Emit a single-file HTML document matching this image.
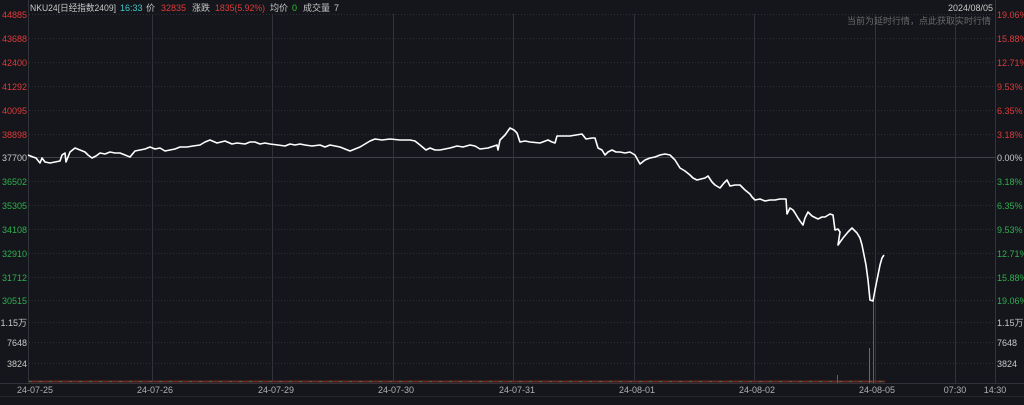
<!DOCTYPE html>
<html><head><meta charset="utf-8"><style>
body{margin:0;background:#14161b;width:1024px;height:400px;overflow:hidden;font-family:"Liberation Sans","Noto Sans CJK SC",sans-serif;}
svg text{font-family:"Liberation Sans","Noto Sans CJK SC",sans-serif;font-size:9px;}
</style></head><body>
<svg width="1024" height="400" xmlns="http://www.w3.org/2000/svg">
<rect width="1024" height="400" fill="#14161b"/>
<g stroke="#2e3137" stroke-width="1" stroke-dasharray="1,2">
<line x1="29" x2="995" y1="14.5" y2="14.5"/><line x1="29" x2="995" y1="38.5" y2="38.5"/><line x1="29" x2="995" y1="62.5" y2="62.5"/><line x1="29" x2="995" y1="86.5" y2="86.5"/><line x1="29" x2="995" y1="110.5" y2="110.5"/><line x1="29" x2="995" y1="134.5" y2="134.5"/><line x1="29" x2="995" y1="181.5" y2="181.5"/><line x1="29" x2="995" y1="205.5" y2="205.5"/><line x1="29" x2="995" y1="229.5" y2="229.5"/><line x1="29" x2="995" y1="253.5" y2="253.5"/><line x1="29" x2="995" y1="277.5" y2="277.5"/><line x1="29" x2="995" y1="300.5" y2="300.5"/><line x1="29" x2="995" y1="322.5" y2="322.5"/><line x1="29" x2="995" y1="342.5" y2="342.5"/><line x1="29" x2="995" y1="363.5" y2="363.5"/>
</g>
<line x1="29" x2="995" y1="157.5" y2="157.5" stroke="#3e4148"/>
<g stroke="#30333a">
<line x1="28.5" x2="28.5" y1="0" y2="383"/><line x1="995.5" x2="995.5" y1="0" y2="383"/>
<line x1="152.5" x2="152.5" y1="14" y2="383"/><line x1="272.5" x2="272.5" y1="14" y2="383"/><line x1="393.5" x2="393.5" y1="14" y2="383"/><line x1="513.5" x2="513.5" y1="14" y2="383"/><line x1="634.5" x2="634.5" y1="14" y2="383"/><line x1="754.5" x2="754.5" y1="14" y2="383"/><line x1="875.5" x2="875.5" y1="14" y2="383"/><line x1="955.5" x2="955.5" y1="14" y2="383"/>
<line x1="0" x2="1024" y1="383.5" y2="383.5"/><line x1="0" x2="1024" y1="396.5" y2="396.5" stroke="#25272c"/>
</g>
<line x1="29" x2="885" y1="381.5" y2="381.5" stroke="#6a2a2a" stroke-width="2"/>
<line x1="29" x2="885" y1="381.5" y2="381.5" stroke="#2f7a3f" stroke-width="1" stroke-dasharray="3,7"/>
<line x1="869.5" x2="869.5" y1="348" y2="383" stroke="#1f9a3a"/>
<line x1="873.5" x2="873.5" y1="300" y2="383" stroke="#d03030"/>
<line x1="837.5" x2="837.5" y1="375" y2="383" stroke="#d03030"/>
<polyline fill="none" stroke="#fff" stroke-width="1.6" stroke-linejoin="round" points="28,155 33,157 36,158 40,163 42,158 45,162 50,163 55,162 60,161 62,155 65,153 66,162 70,152 75,148 80,150 85,152 88,155 92,158 96,156 100,153 105,154 110,152 115,153 120,153 125,155 130,157 135,151 140,150 145,149 150,147 155,149 160,148 165,151 170,150 175,149 180,147 187,147 193,146 200,145 205,142 210,140 217,143 225,141 232,144 237,143 245,144 250,142 255,142 260,144 265,143 270,144 278,145 285,146 290,144 295,145 300,144 305,145 312,146 320,145 325,147 330,145 335,146 340,147 345,149 350,151 355,149 360,147 365,144 370,141 375,139 382,140 390,139 400,140 410,140 415,141 420,145 426,150 430,148 435,150 440,150 445,149 450,148 457,146 463,147 470,145 475,146 480,149 488,148 497,145 498,150 500,140 505,135 510,128 514,130 517,133 520,142 525,141 530,142 540,143 548,140 552,142 555,143 557,136 564,136 570,136 576,135 582,134 586,139 592,138 595,138 598,148 602,150 605,155 608,152 612,150 616,152 620,152 625,153 630,152 635,155 640,164 645,160 650,158 655,157 660,155 665,154 670,155 675,160 680,168 685,171 690,175 693,178 697,180 701,179 705,178 708,176 712,182 715,185 720,188 724,183 727,180 730,186 735,185 740,185 745,190 750,194 752,197 755,200 760,199 765,201 770,200 775,200 780,199 786,199 787,214 790,208 793,210 795,213 798,218 800,221 803,225 805,218 808,212 812,216 818,219 822,217 825,217 830,214 833,215 835,230 838,229 840,232 838,245 843,238 848,232 852,228 857,233 860,238 862,245 864,255 866,265 868,280 870,300 873,301 875,290 877,280 879,270 880,265 882,258 884,255"/>
<text x="30" y="11" fill="#c8c8c8" textLength="86" lengthAdjust="spacingAndGlyphs">NKU24[日经指数2409]</text>
<text x="120" y="11" fill="#3fc8c8">16:33</text>
<text x="146" y="11" fill="#c8c8c8">价</text>
<text x="161" y="11" fill="#e03a3a">32835</text>
<text x="192" y="11" fill="#c8c8c8">涨跌</text>
<text x="215" y="11" fill="#e03a3a" textLength="50" lengthAdjust="spacingAndGlyphs">1835(5.92%)</text>
<text x="270" y="11" fill="#c8c8c8">均价</text>
<text x="292" y="11" fill="#2fc02f">0</text>
<text x="303" y="11" fill="#c8c8c8">成交量</text>
<text x="334" y="11" fill="#c8c8c8">7</text>
<text x="993" y="11" fill="#c8c8c8" text-anchor="end">2024/08/05</text>
<text x="991" y="24" fill="#6a6a6a" text-anchor="end">当前为延时行情，点此获取实时行情</text>
<g text-anchor="end" fill="#e03a3a">
<text x="27" y="18">44885</text><text x="27" y="42">43688</text><text x="27" y="66">42400</text><text x="27" y="90">41292</text><text x="27" y="114">40095</text><text x="27" y="138">38898</text>
</g>
<text x="27" y="161" text-anchor="end" fill="#c8c8c8">37700</text>
<g text-anchor="end" fill="#2fb04f">
<text x="27" y="185">36502</text><text x="27" y="209">35305</text><text x="27" y="233">34108</text><text x="27" y="257">32910</text><text x="27" y="281">31712</text><text x="27" y="304">30515</text>
</g>
<g text-anchor="end" fill="#c8c8c8">
<text x="27" y="326">1.15万</text><text x="27" y="346">7648</text><text x="27" y="367">3824</text>
</g>
<g fill="#e03a3a">
<text x="997" y="18">19.06%</text><text x="997" y="42">15.88%</text><text x="997" y="66">12.71%</text><text x="997" y="90">9.53%</text><text x="997" y="114">6.35%</text><text x="997" y="138">3.18%</text>
</g>
<text x="997" y="161" fill="#c8c8c8">0.00%</text>
<g fill="#2fb04f">
<text x="997" y="185">3.18%</text><text x="997" y="209">6.35%</text><text x="997" y="233">9.53%</text><text x="997" y="257">12.71%</text><text x="997" y="281">15.88%</text><text x="997" y="304">19.06%</text>
</g>
<g fill="#c8c8c8">
<text x="997" y="326">1.15万</text><text x="997" y="346">7648</text><text x="997" y="367">3824</text>
</g>
<g fill="#b0b0b0" text-anchor="middle">
<text x="35" y="393">24-07-25</text><text x="155" y="393">24-07-26</text><text x="276" y="393">24-07-29</text><text x="396" y="393">24-07-30</text><text x="517" y="393">24-07-31</text><text x="637" y="393">24-08-01</text><text x="757" y="393">24-08-02</text><text x="877" y="393">24-08-05</text><text x="955" y="393">07:30</text><text x="995" y="393">14:30</text>
</g>
</svg>
</body></html>
